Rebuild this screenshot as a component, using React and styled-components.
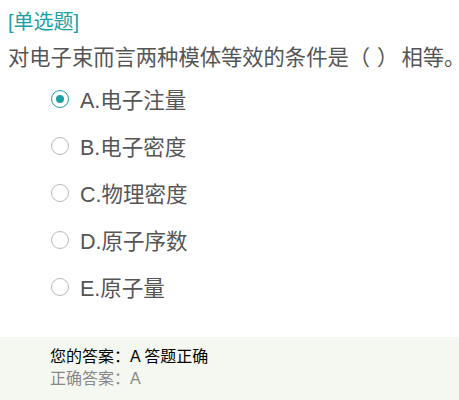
import React from 'react';
import styled, { createGlobalStyle } from 'styled-components';

const GlobalStyle = createGlobalStyle`
  body {
    margin: 0;
    background: #fff;
    font-family: "Liberation Sans", "Noto Sans CJK SC", sans-serif;
  }
`;

const Page = styled.div`
  width: 459px;
  height: 400px;
  display: flex;
  flex-direction: column;
  overflow: hidden;
`;

const Body = styled.div`
  padding: 10px 8px 0;
`;

const Tag = styled.div`
  font-size: 20px;
  line-height: 24px;
  color: #1aa0a4;
`;

const Question = styled.div`
  margin-top: 9px;
  font-size: 21.3px;
  line-height: 30px;
  color: #555;
  white-space: nowrap;
`;

const Blank = styled.span`
  margin: 0 3px 0 7px;
`;

const Options = styled.div`
  margin-top: 2px;
  padding-left: 43px;
  display: flex;
  flex-direction: column;
`;

const Option = styled.label`
  height: 47px;
  display: flex;
  align-items: center;
  gap: 11px;
  font-size: 21.5px;
  color: #555;
`;

const Radio = styled.span`
  flex: none;
  width: 18px;
  height: 18px;
  box-sizing: border-box;
  border-radius: 50%;
  border: 1.5px solid ${(p) => (p.$checked ? '#1aa0a4' : '#bbb')};
  display: flex;
  align-items: center;
  justify-content: center;

  &::after {
    content: '';
    width: 8px;
    height: 8px;
    border-radius: 50%;
    background: ${(p) => (p.$checked ? '#1aa0a4' : 'transparent')};
  }
`;

const Footer = styled.div`
  margin-top: auto;
  height: 63px;
  box-sizing: border-box;
  padding: 9px 50px 0;
  background: #f5f8f0;
  font-size: 16px;
  line-height: 22px;
`;

const Line = styled.div`
  color: ${(p) => (p.$muted ? '#888' : '#000')};
`;

const options = ['A.电子注量', 'B.电子密度', 'C.物理密度', 'D.原子序数', 'E.原子量'];

export default function App() {
  return (
    <Page>
      <GlobalStyle />
      <Body>
        <Tag>[单选题]</Tag>
        <Question>
          对电子束而言两种模体等效的条件是（<Blank>）</Blank>相等。
        </Question>
        <Options>
          {options.map((o, i) => (
            <Option key={o}>
              <Radio $checked={i === 0} />
              {o}
            </Option>
          ))}
        </Options>
      </Body>
      <Footer>
        <Line>您的答案：A 答题正确</Line>
        <Line $muted>正确答案：A</Line>
      </Footer>
    </Page>
  );
}
